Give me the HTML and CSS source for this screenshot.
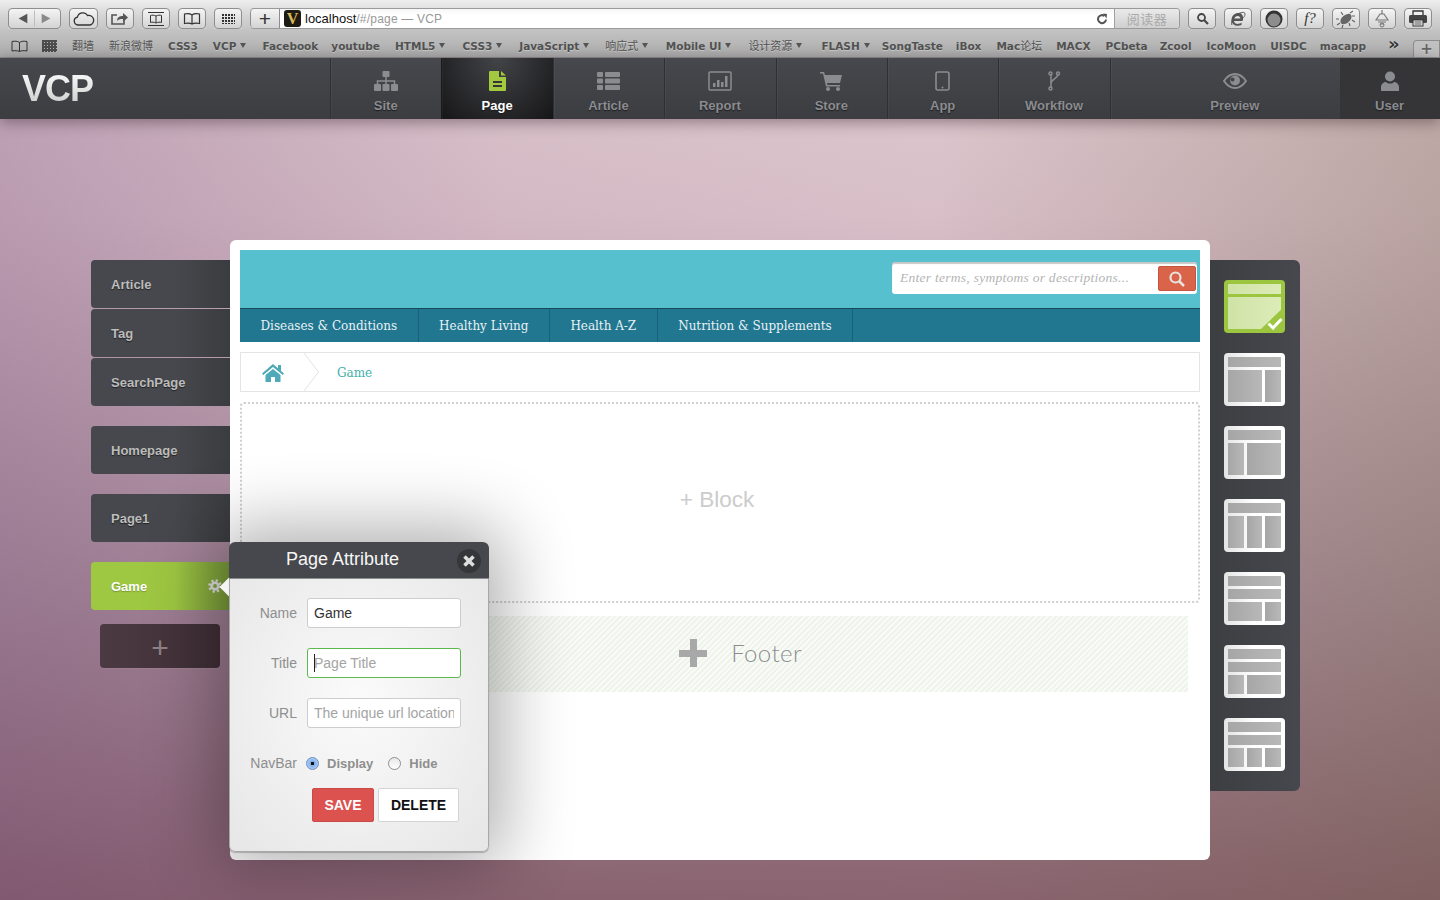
FILE: index.html
```html
<!DOCTYPE html>
<html lang="en">
<head>
  <meta charset="UTF-8" />
  <title>localhost/#/page - VCP</title>
  <link rel="stylesheet" href="styles.css">
</head>
<body>
  <div class="toolbar">
    <div class="tbtn nav-pair">
      <svg width="53" height="21" viewBox="0 0 53 21"><path d="M10 10.500l9-5v10z" fill="#555"/><path d="M34 5.500l9 5-9 5z" fill="#8a8a8a"/><path d="M26.500 2v17" stroke="#bbb"/></svg>
    </div>
    <div class="tbtn w29"><svg width="22" height="14" viewBox="0 0 22 14"><path d="M5 13a4 4 0 0 1-.6-7.900A5.500 5.500 0 0 1 14.500 3.500 4.600 4.600 0 0 1 17 13z" fill="none" stroke="#333" stroke-width="1.300"/></svg></div>
    <div class="tbtn w28"><svg width="18" height="14" viewBox="0 0 18 14"><path d="M13 6v6H1V3h5" fill="none" stroke="#555" stroke-width="1.600"/><path d="M6 9c0-4 3-5 6-5V1l5 4.500-5 4.500V7C9 7 7 7.500 6 9z" fill="#555"/></svg></div>
    <div class="tbtn w28"><svg width="18" height="14" viewBox="0 0 18 14"><path d="M1 .5h16M1 13.500h16" stroke="#333"/><path d="M9 4C7 3 5 3 3.500 3.500v7C5 10 7 10 9 11c2-1 4-1 5.500-.5v-7C13 3 11 3 9 4zm0 0v7" fill="none" stroke="#333"/></svg></div>
    <div class="tbtn w28"><svg width="18" height="13" viewBox="0 0 18 13"><path d="M9 3C7 1.500 4 1.500 1.500 2v9.500C4 11 7 11 9 12c2-1 5-1 7.500-.5V2C14 1.500 11 1.500 9 3zm0 0v9" fill="none" stroke="#333" stroke-width="1.200"/></svg></div>
    <div class="tbtn w28"><span class="dots"></span></div>
    <div class="address">
      <div class="tbtn plus-btn">+</div>
      <span class="favicon">V</span>
      <span class="host">localhost</span><span class="path">/#/page — VCP</span>
      <svg class="reload" width="12" height="12" viewBox="0 0 12 12"><path d="M10 6.500A4 4 0 1 1 8.500 3" fill="none" stroke="#555" stroke-width="2"/><path d="M7 .5l4 .5-.5 4.500z" fill="#555"/></svg>
      <div class="reader">阅读器</div>
    </div>
    <div class="tbtn w28"><svg width="13" height="13" viewBox="0 0 13 13"><circle cx="5.500" cy="5.500" r="3.500" fill="none" stroke="#444" stroke-width="1.800"/><path d="M8 8l4 4" stroke="#444" stroke-width="2.200"/></svg></div>
    <div class="tbtn w28"><svg width="18" height="18" viewBox="0 0 18 18"><path d="M13.500 11H5c.3 3 4.500 4 7.500 1.500v2.500C8 17 2.500 15 2.500 10S7 2.500 10 3c3 0 4.500 3 4 6.500zM5.200 8.500h6.200C11.500 5 6 5 5.200 8.500z" fill="#555"/><path d="M3 15C1 12 5 5 11 3c3-1 5-1 5 1s-1 3-2 4" fill="none" stroke="#555" stroke-width=".9"/></svg></div>
    <div class="tbtn w28"><svg width="20" height="20" viewBox="0 0 20 20"><circle cx="10" cy="10" r="8.500" fill="#333"/><circle cx="10" cy="11" r="6.500" fill="#8d8d8d"/></svg></div>
    <div class="tbtn w28 fq">f?</div>
    <div class="tbtn w28"><svg width="20" height="18" viewBox="0 0 20 18"><ellipse cx="10" cy="9" rx="6.500" ry="4" transform="rotate(-40 10 9)" fill="#666"/><path d="M14 3l3-2M16 6l3 0M4 13l-3 2M7 15l-1 3M7 5L5 2M3 9H0M13 13l1 3M16 10l3 2" stroke="#666" stroke-width="1.200"/></svg></div>
    <div class="tbtn w28"><svg width="14" height="18" viewBox="0 0 14 18"><path d="M7 0v4M5 4h4l4 6H1zM3 12h8M5 14h4" fill="none" stroke="#777" stroke-width="1.200"/><circle cx="7" cy="15" r="2" fill="none" stroke="#777"/></svg></div>
    <div class="tbtn w28"><svg width="20" height="17" viewBox="0 0 20 17"><path d="M5 5V1h10v4" fill="#eee" stroke="#333" stroke-width="1.300"/><rect x="1" y="5" width="18" height="8" rx="1.500" fill="#444"/><rect x="5" y="10" width="10" height="6" fill="#eee" stroke="#333"/><path d="M6.500 12h7M6.500 14h7" stroke="#555"/></svg></div>
  </div>

  <div class="bookmarks">
    <svg class="bm-book" width="17" height="12" viewBox="0 0 17 12"><path d="M8.500 2.500C6.500 1 4 1 1 1.500v9.500c3-.5 5.500-.5 7.500 .5 2-1 4.500-1 7.500-.5V1.500C13 1 10.500 1 8.500 2.500zm0 0v9" fill="none" stroke="#333"/></svg>
    <span class="bm-grid"></span>
    <a class="bm cjk">翻墙</a>
    <a class="bm cjk">新浪微博</a>
    <a class="bm">CSS3</a>
    <a class="bm more">VCP</a>
    <a class="bm m16">Facebook</a>
    <a class="bm m13">youtube</a>
    <a class="bm more">HTML5</a>
    <a class="bm more m17">CSS3</a>
    <a class="bm more m17">JavaScript</a>
    <a class="bm more cjk m16">响应式</a>
    <a class="bm more m18">Mobile UI</a>
    <a class="bm more cjk m17">设计资源</a>
    <a class="bm more m19">FLASH</a>
    <a class="bm m12">SongTaste</a>
    <a class="bm m13">iBox</a>
    <a class="bm">Mac<span class="cjk">论坛</span></a>
    <a class="bm m14">MACX</a>
    <a class="bm">PCbeta</a>
    <a class="bm m12">Zcool</a>
    <a class="bm">IcoMoon</a>
    <a class="bm m14">UISDC</a>
    <a class="bm m13">macapp</a>
    <span class="bm-overflow">»</span>
    <span class="bm-newtab">+</span>
  </div>

  <header class="appnav">
    <div class="logo"><span>VCP</span></div>
    <a class="nav-item">
      <svg width="24" height="20" viewBox="0 0 24 20"><rect x="8.500" y="0" width="7" height="6" rx="1"/><rect x="0" y="13" width="7" height="7" rx="1"/><rect x="8.500" y="13" width="7" height="7" rx="1"/><rect x="17" y="13" width="7" height="7" rx="1"/><path d="M12 6v7M3.500 13v-3h17v3" fill="none" stroke="#8b8c90" stroke-width="1.500"/></svg>
      Site
    </a>
    <a class="nav-item active">
      <svg width="17" height="20" viewBox="0 0 17 20"><path fill="#a2c83f" fill-rule="evenodd" d="M1 0h9v6h7v13a1 1 0 0 1-1 1H1a1 1 0 0 1-1-1V1a1 1 0 0 1 1-1zm11 0l5 4.500h-5zM4 10v2h9v-2zm0 4v2h9v-2z"/></svg>
      Page
    </a>
    <a class="nav-item">
      <svg width="23" height="18" viewBox="0 0 23 18"><rect width="6" height="5" rx="1"/><rect x="8" width="15" height="5" rx="1"/><rect y="6.500" width="6" height="5" rx="1"/><rect x="8" y="6.500" width="15" height="5" rx="1"/><rect y="13" width="6" height="5" rx="1"/><rect x="8" y="13" width="15" height="5" rx="1"/></svg>
      Article
    </a>
    <a class="nav-item">
      <svg width="24" height="20" viewBox="0 0 24 20"><rect x="1" y="1" width="22" height="18" rx="1" fill="none" stroke="#8b8c90" stroke-width="1.500"/><rect x="5" y="12" width="2.500" height="4"/><rect x="9" y="9" width="2.500" height="7"/><rect x="13" y="11" width="2.500" height="5"/><rect x="17" y="5" width="2.500" height="11"/></svg>
      Report
    </a>
    <a class="nav-item">
      <svg width="22" height="20" viewBox="0 0 22 20"><path d="M0 1h4l1 3h17l-2 8H7l.5 2H20v1.500H6L3 2.500H0z"/><circle cx="8" cy="18" r="2"/><circle cx="18" cy="18" r="2"/></svg>
      Store
    </a>
    <a class="nav-item">
      <svg width="15" height="20" viewBox="0 0 15 20"><rect x="1" y="1" width="13" height="18" rx="2" fill="none" stroke="#8b8c90" stroke-width="1.600"/><circle cx="7.500" cy="16.500" r="1"/></svg>
      App
    </a>
    <a class="nav-item">
      <svg width="14" height="20" viewBox="0 0 14 20"><g fill="none" stroke="#8b8c90" stroke-width="1.500"><path d="M4 3v14"/><path d="M11 3c0 5-6 4-7 9"/><circle cx="3.500" cy="2.500" r="1.500"/><circle cx="11" cy="2.500" r="1.500"/><circle cx="3.500" cy="17.500" r="1.500"/></g></svg>
      Workflow
    </a>
    <a class="nav-item wide">
      <svg width="24" height="20" viewBox="0 0 24 20"><path d="M1 10c3-4.500 7-7 11-7s8 2.500 11 7c-3 4.500-7 7-11 7s-8-2.500-11-7z" fill="none" stroke="#8b8c90" stroke-width="2"/><path fill-rule="evenodd" d="M12 4.500a5 5 0 1 1 0 10 5 5 0 0 1 0-10zM9.500 6.500a2 2 0 1 0 .01 0z"/></svg>
      Preview
    </a>
    <a class="nav-item user">
      <svg width="18" height="20" viewBox="0 0 18 20"><circle cx="9" cy="5.500" r="5"/><path d="M0 20v-4c0-3 3-5 5-5 1 1 2.500 1.500 4 1.500s3-.5 4-1.500c2 0 5 2 5 5v4z"/></svg>
      User
    </a>
  </header>

  <main class="stage">
    <aside class="sidebar">
      <div class="side-group">
        <a class="side-item">Article</a>
        <a class="side-item">Tag</a>
        <a class="side-item">SearchPage</a>
      </div>
      <a class="side-item">Homepage</a>
      <a class="side-item">Page1</a>
      <a class="side-item current">Game
        <svg class="gear" width="14" height="14" viewBox="0 0 14 14"><circle cx="7" cy="7" r="3.300" fill="none" stroke="#ddd" stroke-width="2.600"/><circle cx="7" cy="7" r="5.500" fill="none" stroke="#ddd" stroke-width="2.600" stroke-dasharray="2.160 2.160"/></svg>
      </a>
      <a class="side-add">+</a>
    </aside>

    <section class="canvas">
      <div class="site-head">
        <div class="search">
          <span class="search-hint">Enter terms, symptoms or descriptions...</span>
          <button class="search-btn"><svg width="16" height="16" viewBox="0 0 16 16"><circle cx="6.500" cy="6.500" r="5" fill="none" stroke="#e8e4e0" stroke-width="2.200"/><path d="M10 10l5 5" stroke="#e8e4e0" stroke-width="2.500"/></svg></button>
        </div>
      </div>
      <nav class="site-nav">
        <a>Diseases &amp; Conditions</a>
        <a>Healthy Living</a>
        <a>Health A-Z</a>
        <a>Nutrition &amp; Supplements</a>
      </nav>
      <div class="crumbs">
        <svg class="home" width="22" height="18" viewBox="0 0 22 18"><path d="M11 0L0 9.500l1.300 1.400L11 3l9.700 7.900L22 9.500l-3-2.600V1h-3v3.300z" fill="#4fa9b8"/><path d="M3.500 11L11 5l7.500 6v7h-5.500v-5H9v5H3.500z" fill="#4fa9b8"/></svg>
        <svg class="crumb-sep" width="15" height="38" viewBox="0 0 15 38"><path d="M0 0l14.500 19L0 38" fill="none" stroke="#e2e2e2"/></svg>
        <span class="crumb-text">Game</span>
      </div>
      <div class="block-drop"><span>+ Block</span></div>
      <div class="footer-drop">
        <span class="cross"></span>
        <span class="footer-word">Footer</span>
      </div>
    </section>

    <aside class="layouts">
      <div class="thumb on">
        <i></i><i class="cut"></i>
        <svg class="tick" width="16" height="13" viewBox="0 0 16 13"><path d="M1.500 6.500l4.500 4.500 8.500-9" fill="none" stroke="#fff" stroke-width="3"/></svg>
      </div>
      <div class="thumb"><i></i><div class="cols"><i class="big"></i><i></i></div></div>
      <div class="thumb"><i></i><div class="cols"><i></i><i class="big"></i></div></div>
      <div class="thumb"><i></i><div class="cols"><i class="eq"></i><i class="eq"></i><i class="eq"></i></div></div>
      <div class="thumb"><i></i><i></i><div class="cols"><i class="big"></i><i></i></div></div>
      <div class="thumb"><i></i><i></i><div class="cols"><i></i><i class="big"></i></div></div>
      <div class="thumb"><i></i><i></i><div class="cols"><i class="eq"></i><i class="eq"></i><i class="eq"></i></div></div>
    </aside>

    <form class="modal">
      <div class="modal-head">
        <span>Page Attribute</span>
        <span class="close"><svg width="14" height="14" viewBox="0 0 14 14"><path d="M2.500 2.500l9 9M11.500 2.500l-9 9" stroke="#dedede" stroke-width="3.600"/></svg></span>
      </div>
      <div class="modal-body">
        <div class="row"><label>Name</label><input type="text" value="Game"></div>
        <div class="row"><label>Title</label><div class="focus-wrap"><input class="focused" type="text" placeholder="Page Title"></div></div>
        <div class="row"><label>URL</label><input type="text" placeholder="The unique url location"></div>
        <div class="row radios">
          <label>NavBar</label>
          <span class="radio checked"></span><b>Display</b>
          <span class="radio"></span><b>Hide</b>
        </div>
        <div class="actions">
          <button type="button" class="save">SAVE</button>
          <button type="button" class="delete">DELETE</button>
        </div>
      </div>
    </form>
  </main>
</body>
</html>
```

FILE: styles.css
```css
* { box-sizing: border-box; }
html, body { margin: 0; height: 100%; }
body { width: 1440px; height: 900px; overflow: hidden; display: flex; flex-direction: column; font-family: "Liberation Sans", Arial, sans-serif; background: #8a5f70; }
a { text-decoration: none; color: inherit; }

/* browser chrome */
.toolbar { height: 29px; padding: 8px 8px 0; display: flex; gap: 8px; background: linear-gradient(#eeeeee, #d2d2d2 60%, #c6c6c6); }
.tbtn { height: 21px; display: flex; align-items: center; justify-content: center; border: 1px solid #8e8e8e; border-radius: 4px; background: linear-gradient(#f4f4f4, #d4d4d4); box-shadow: 0 1px 0 rgba(255,255,255,.5); flex: none; }
.nav-pair { width: 53px; }
.w29 { width: 29px; }
.w28 { width: 28px; }
.dots { width: 13px; height: 10px; background: radial-gradient(circle at 1px 1px, #333 1px, transparent 1.100px) 0 0 / 3px 3px; }
.address { flex: 1; display: flex; align-items: center; height: 21px; background: linear-gradient(#f6f6f6, #fff 30%); border: 1px solid #9a9a9a; border-left: 0; border-radius: 4px; overflow: hidden; font-size: 13px; }
.plus-btn { width: 30px; margin-left: 0; border-radius: 4px 0 0 4px; border-width: 0 1px 0 1px; height: 100%; font-size: 21px; color: #333; line-height: 1; }
.favicon { width: 17px; height: 17px; margin: 0 4px 0 4px; border-radius: 3px; background: #1e1a14; color: #d9b95a; font: bold 16px/17px "Liberation Serif", serif; text-align: center; flex: none; }
.host { color: #111; }
.path { color: #999; font-size: 12px; letter-spacing: .2px; }
.reload { margin-left: auto; margin-right: 6px; }
.reader { width: 65px; height: 100%; background: linear-gradient(#eaeaea, #cfcfcf); border-left: 1px solid #a0a0a0; color: #aaa; text-align: center; font: 13px/19px "Noto Sans CJK SC", sans-serif; letter-spacing: .5px; }
.fq { font: italic 15px "Liberation Serif", serif; color: #333; }

.bookmarks { height: 29px; padding-top: 8px; position: relative; display: flex; align-items: flex-start; background: linear-gradient(#c4c4c4, #ababab); border-bottom: 1px solid #8c8c8c; font: bold 10.500px/18px "DejaVu Sans", "Noto Sans CJK SC", sans-serif; color: #525252; white-space: nowrap; text-shadow: 0 1px 0 rgba(255,255,255,.35); }
.bm-book { margin: 3px 0 0 11px; flex: none; }
.bm-grid { width: 15px; height: 12px; margin: 3px 0 0 14px; flex: none; background: repeating-linear-gradient(#333 0 2px, transparent 2px 3px), repeating-linear-gradient(90deg, #333 0 2px, transparent 2px 3px); opacity: .8; }
.bm { flex: none; margin-left: 15px; }
.bm.m12 { margin-left: 12px; }
.bm.m13 { margin-left: 13px; }
.bm.m14 { margin-left: 14px; }
.bm.m16 { margin-left: 16px; }
.bm.m17 { margin-left: 17px; }
.bm.m18 { margin-left: 17.500px; }
.bm.m19 { margin-left: 19px; }
.cjk { font-size: 11px; font-weight: 400; }
.bm.cjk { margin-top: 1px; }
.more::after { content: ""; display: inline-block; margin-left: 4px; vertical-align: 2px; border: 3.500px solid transparent; border-top: 5px solid #555; border-bottom: 0; }
.bm-overflow { position: absolute; left: 1388px; top: 5px; font-size: 18px; line-height: 20px; color: #333; }
.bm-newtab { position: absolute; left: 1413px; top: 11px; width: 27px; height: 17px; border: 1px solid #8c8c8c; border-bottom: 0; border-radius: 4px 0 0 0; background: #c0c0c0; text-align: center; font-size: 15px; line-height: 17px; color: #666; }

/* app nav */
.appnav { height: 61px; display: flex; flex: none; background: linear-gradient(#47484d, #3c3d41); color: #8b8c90; box-shadow: 0 3px 14px rgba(30,10,20,.4); position: relative; z-index: 2; }
.logo { width: 330px; padding: 13px 0 0 22px; }
.logo span { font: bold 36px/36px "Liberation Sans", sans-serif; letter-spacing: -1px; background: linear-gradient(#ffffff, #c8c8c8); -webkit-background-clip: text; background-clip: text; color: transparent; }
.nav-item { width: 111.400px; flex: none; display: flex; flex-direction: column; align-items: center; justify-content: flex-end; gap: 7px; padding: 0 1px 6px 0; border-left: 1px solid #2f3033; box-shadow: inset 1px 0 0 rgba(255,255,255,.04); font-size: 13px; font-weight: bold; line-height: 15px; text-shadow: 0 1px 1px #1d1d1f; }
.nav-item svg { fill: #8b8c90; height: 20px; }
.nav-item.active { background: radial-gradient(ellipse at 50% 0, #434448, #161618); color: #fff; border-left-color: #1a1a1a; }
.nav-item.wide { flex: 1; padding-left: 20px; }
.nav-item.user { width: 100px; background: #353538; border-left: 0; box-shadow: none; }

/* stage */
.stage { flex: 1; position: relative; display: flex; align-items: flex-start; padding: 121px 0 0 91px; background:
    linear-gradient(90deg, rgba(105,60,115,.27), rgba(120,70,110,.05) 35%, rgba(120,90,60,0) 65%, rgba(100,85,50,.26)),
    linear-gradient(#dcc5cc, #d8bfc8 12%, #a98d9a 62%, #8a6470); }

.sidebar { width: 139px; margin-top: 20px; display: flex; flex-direction: column; gap: 20px; flex: none; }
.side-group { display: flex; flex-direction: column; gap: 1px; }
.side-item { height: 48px; display: flex; align-items: center; justify-content: space-between; padding: 0 8px 0 20px; border-radius: 4px 0 0 4px; background: linear-gradient(90deg, #47484d 60%, #3b3c40); color: #bcbcbc; font-size: 13px; font-weight: bold; text-shadow: 0 1px 1px #222; }
.side-item.current { background: linear-gradient(90deg, #9ec742 60%, #77993a); color: #fff; text-shadow: 0 1px 1px rgba(0,0,0,.25); }
.side-add { width: 120px; height: 44px; margin: -6px 0 0 9px; border-radius: 4px; background: linear-gradient(90deg, #4c3a42, #3f2f36); color: #8d8387; font: 300 30px/48px "Liberation Sans", sans-serif; text-align: center; box-shadow: 0 1px 0 rgba(255,255,255,.06); }

.canvas { width: 980px; height: 620px; flex: none; padding: 10px 10px 0; background: #fff; border-radius: 6px; }
.site-head { height: 58px; display: flex; align-items: flex-start; justify-content: flex-end; padding-top: 12px; background: #57c0cf; }
.search { width: 305px; height: 32px; margin-right: 3px; display: flex; align-items: center; justify-content: space-between; padding: 0 1px 0 8px; background: #fff; border-radius: 3px; box-shadow: inset 0 2px 1px rgba(0,0,0,.22); }
.search-hint { font: italic 13.500px "Liberation Serif", serif; color: #b4b4b4; letter-spacing: .02em; }
.search-btn { width: 38px; height: 25px; padding: 0; display: flex; align-items: center; justify-content: center; background: #d9644a; border: 1px solid #c4553e; border-radius: 2px; margin-top: 1px; }
.site-nav { height: 34px; display: flex; background: #217690; border-top: 1px solid #164a5a; font: 12px/35px "DejaVu Serif", serif; color: #e8f2f4; }
.site-nav a { padding: 0 20.500px; border-right: 1px solid #196178; letter-spacing: -.02px; }
.crumbs { height: 40px; margin-top: 10px; display: flex; align-items: center; border: 1px solid #e4e4e4; padding-left: 21px; }
.home { margin-top: 2px; }
.crumb-sep { margin-left: 20px; }
.crumb-text { margin-left: 18px; padding-top: 2px; font: 12px "DejaVu Serif", serif; color: #3fb0a8; }
.block-drop { height: 201px; margin-top: 10px; display: flex; align-items: center; justify-content: center; border: 2px dotted #cfcfcf; border-radius: 4px; font-size: 22.500px; color: #ccc; padding: 0 6px 6px 0; }
.footer-drop { height: 76px; margin: 13px 12px 0; display: flex; align-items: center; justify-content: center; gap: 24px; padding: 0 0 2px 41px; background: repeating-linear-gradient(135deg, #eef4ec 0 2px, #f8fbf6 2px 4px); }
.cross { width: 28px; height: 28px; background: linear-gradient(#a8a8a8, #a8a8a8) center / 100% 7px no-repeat, linear-gradient(#a8a8a8, #a8a8a8) center / 7px 100% no-repeat; }
.footer-word { padding-bottom: 2px; font: 300 24px "Lato", sans-serif; letter-spacing: .4px; color: #8c8c8c; text-shadow: 0 0 2px #fff; }

/* layout picker */
.layouts { width: 90px; height: 531px; margin-top: 20px; flex: none; display: flex; flex-direction: column; gap: 20px; padding: 20px 0 0 14px; background: linear-gradient(90deg, #3d3e42, #47484d); border-radius: 0 6px 6px 0; }
.thumb { position: relative; width: 61px; height: 53px; flex: none; display: flex; flex-direction: column; gap: 3px; padding: 4px; border-radius: 4px; background: linear-gradient(90deg, #e4e4e4, #fff 50%); }
.thumb i { display: block; height: 10px; background: linear-gradient(90deg, #a6a6a6, #b8b8b8); }
.cols { flex: 1; display: flex; gap: 3px; }
.cols i { height: auto; width: 16px; }
.cols i.big { width: 34px; }
.cols i.eq { width: auto; flex: 1; }
.thumb.on { background: #9cc63f; }
.thumb.on i { background: linear-gradient(90deg, #cfe3a6, #dcecb8); }
.thumb.on i.cut { flex: 1; clip-path: polygon(0 0, 100% 0, 100% 40%, 62% 100%, 0 100%); }
.tick { position: absolute; right: 2px; bottom: 3px; }

/* modal */
.modal { position: absolute; left: 229px; top: 423px; width: 260px; height: 310px; border-radius: 6px; box-shadow: 0 0 70px 14px rgba(0,0,0,.32); z-index: 3; }
.modal::before { content: ""; position: absolute; left: -7px; top: 38px; width: 14px; height: 14px; background: #f4f4f4; transform: rotate(45deg) scale(.95); }
.modal-head { position: relative; height: 37px; display: flex; align-items: center; padding: 0 0 2px 57px; background: #47484d; border-radius: 6px 6px 0 0; border-bottom: 1px solid #8b8c8e; color: #f6f6f6; font-size: 18px; }
.close { position: absolute; right: 8px; top: 7px; width: 24px; height: 24px; display: flex; align-items: center; justify-content: center; border-radius: 50%; background: #35363a; }
.modal-body { position: relative; height: 273px; padding: 19px 28px 0 0; background: radial-gradient(ellipse at 50% 45%, #fbfbfb, #e6e6e6); border: 1px solid #a8a8a8; border-top: 0; border-radius: 0 0 6px 6px; box-shadow: 0 1px 1px rgba(0,0,0,.2); }
.row { height: 30px; margin-bottom: 20px; display: flex; align-items: center; font-size: 14px; color: #8e8e8e; }
.row label { width: 67px; margin-right: 10px; text-align: right; flex: none; }
.row input { width: 154px; height: 30px; padding: 0 6px; border: 1px solid #cdcdcd; border-radius: 3px; font: 14px "Liberation Sans", sans-serif; color: #333; background: #fff; }
.row input::placeholder { color: #a4a4a4; }
.focus-wrap { position: relative; width: 154px; }
.focus-wrap::after { content: ""; position: absolute; left: 7px; top: 6px; width: 1px; height: 18px; background: #222; }
.row input.focused { border-color: #5cb94c; }
.radios { margin-top: 20px; margin-bottom: 10px; height: 30px; font-size: 13px; }
.radios label { font-size: 14px; margin-right: 9px; }
.radios b { color: #8e8e8e; }
.radio { width: 13px; height: 13px; margin-right: 8px; border-radius: 50%; border: 1px solid #8e8e8e; background: linear-gradient(#e8e8e8, #fff); flex: none; }
.radio.checked { margin-top: 1px; border-color: #6b8fbe; background: radial-gradient(circle, #111 1.500px, #7fb0ee 2px, #c8dcf6); }
.radios b:nth-of-type(1) { margin-right: 15px; }
.actions { display: flex; justify-content: flex-end; gap: 4px; margin-right: 1px; }
.actions button { height: 34px; border-radius: 2px; font: bold 14px "Liberation Sans", sans-serif; padding: 0; cursor: pointer; }
.save { width: 62px; background: #dc524f; border: 1px solid #c94a47; color: #fff; }
.delete { width: 81px; background: #fff; border: 1px solid #d4d4d4; color: #111; }
```
